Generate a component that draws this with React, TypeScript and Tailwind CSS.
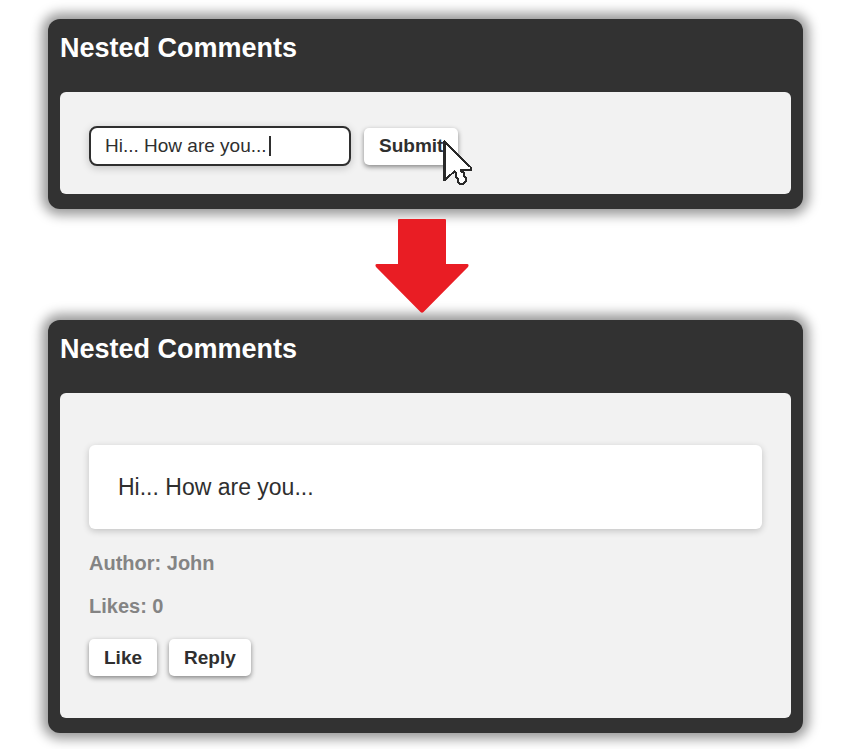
import { useState, type ReactNode } from "react";

function Panel({ children }: { children: ReactNode }) {
  return (
    <section className="rounded-xl bg-[#323232] px-3 pb-[15px] shadow-[0_0_12px_6px_rgba(0,0,0,0.4)]">
      <h1 className="pt-[11px] pb-[26px] text-[27px] leading-9 font-bold text-white">Nested Comments</h1>
      <div className="rounded-md bg-[#f2f2f2] px-[29px]">{children}</div>
    </section>
  );
}

function ActionButton({ children }: { children: ReactNode }) {
  return (
    <button
      type="button"
      className="h-[37px] rounded-[5px] bg-white px-[15px] text-[19px] leading-6 font-bold text-[#2f2f2f] shadow-[0_2px_5px_rgba(0,0,0,0.45)]"
    >
      {children}
    </button>
  );
}

function Pointer() {
  return (
    <svg
      className="pointer-events-none absolute top-3 left-[79px]"
      width="30"
      height="46"
      viewBox="0 0 30 46"
      shapeRendering="crispEdges"
      aria-hidden="true"
    >
      <path
        d="M1.5 1.5V40L11.500 31.500L13 33V37L15 39V42L17 44H20L23 41V38L21 36V33L18 31V29.500H27.500V27L24 24Z"
        fill="#fff"
        stroke="#292929"
        strokeWidth="2"
      />
      <path d="M1.5 1V41" stroke="#292929" strokeWidth="3" />
    </svg>
  );
}

function DownArrow() {
  return (
    <svg className="relative" width="94" height="94" viewBox="0 0 94 94" aria-hidden="true">
      <path
        d="M24 0H70Q71 0 71 1V45H92Q94.500 45 93 48L48.500 93Q47 94.500 45.500 93L1 48Q-.5 45 2 45H23V1Q23 0 24 0Z"
        fill="#e91d24"
      />
    </svg>
  );
}

export default function App() {
  const [comment, setComment] = useState("Hi... How are you...");

  return (
    <main className="bg-white pt-[19px] pr-[47px] pb-4 pl-12 font-['Liberation_Sans',Arial,sans-serif] text-[#2f2f2f]">
      <Panel>
        <form className="flex items-center gap-[13px] pt-[34px] pb-7" onSubmit={(e) => e.preventDefault()}>
          <div className="relative">
            <input
              aria-label="Comment"
              value={comment}
              onChange={(e) => setComment(e.target.value)}
              className="block h-10 w-[262px] rounded-lg border-2 border-[#2f2f2f] bg-white px-3.5 text-[19px] leading-6 caret-transparent shadow-[0_2px_8px_rgba(0,0,0,0.2)] outline-none"
            />
            <span className="absolute top-2.5 left-[180px] h-5 w-0.5 bg-[#2f2f2f]" />
          </div>
          <div className="relative">
            <ActionButton>Submit</ActionButton>
            <Pointer />
          </div>
        </form>
      </Panel>

      <div className="flex justify-center pt-2.5 pr-[7px] pb-[7px]">
        <DownArrow />
      </div>

      <Panel>
        <article className="pt-[52px] pb-[42px]">
          <p className="rounded-md bg-white px-[29px] py-[27px] text-[23px] leading-[30px] shadow-[0_2px_7px_rgba(0,0,0,0.2)]">
            Hi... How are you...
          </p>
          <p className="pt-[22px] text-[20px] leading-6 font-bold text-[#848484]">Author: John</p>
          <p className="pt-[19px] text-[20px] leading-6 font-bold text-[#848484]">Likes: 0</p>
          <div className="flex gap-3 pt-[21px]">
            <ActionButton>Like</ActionButton>
            <ActionButton>Reply</ActionButton>
          </div>
        </article>
      </Panel>
    </main>
  );
}
